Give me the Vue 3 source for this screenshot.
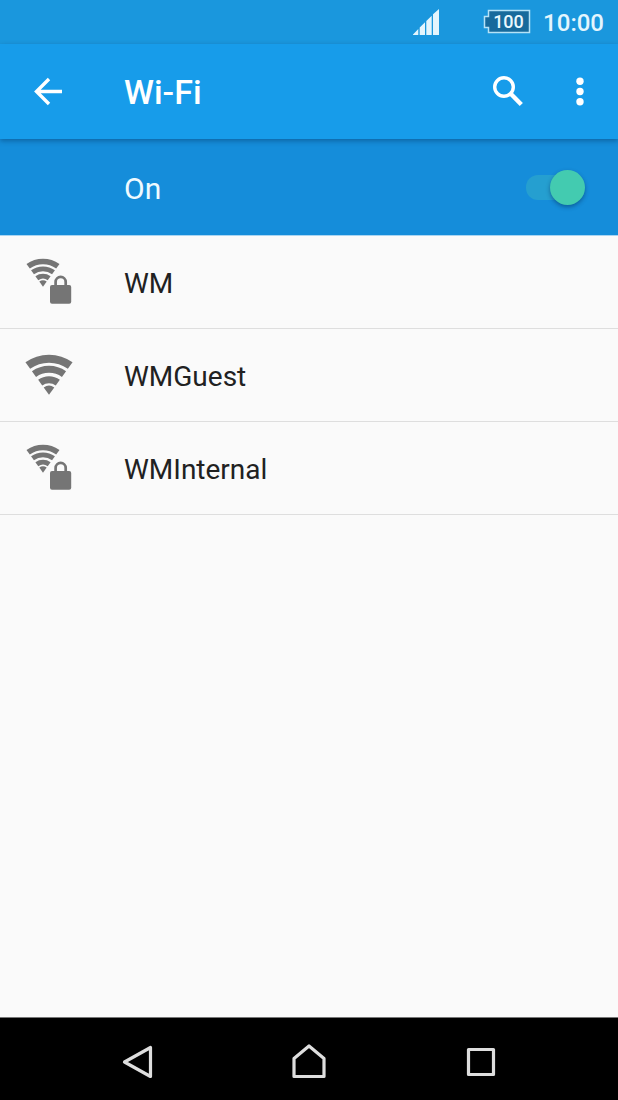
<script setup>
import { ref } from 'vue'

const enabled = ref(true)
const networks = [
  { name: 'WM', secured: true },
  { name: 'WMGuest', secured: false },
  { name: 'WMInternal', secured: true }
]
</script>

<template>
  <div class="screen">
    <div class="status-bar">
      <svg class="signal" width="26" height="26" viewBox="0 0 26 26" aria-hidden="true">
        <path d="M0 26V25.5L5.3 20V26ZM6.7 26V18.5L12 13.3V26ZM13.3 26V12L18.7 6.7V26ZM20 26V5.3L26 0V26Z" />
      </svg>
      <svg class="battery" width="48" height="26" viewBox="0 0 48 26" aria-hidden="true">
        <path d="M5.5 1.500H46.500V23.500H5.500V18.500H1.500V7.500H5.500Z" />
        <text x="25.500" y="19" text-anchor="middle">100</text>
      </svg>
      <span class="clock">10:00</span>
    </div>

    <header class="app-bar">
      <button class="icon-button" type="button" aria-label="Back">
        <svg width="48" height="48" viewBox="0 0 48 48">
          <path class="line" d="M38 23.500H13M25 11L12.500 23.500L25 36" />
        </svg>
      </button>
      <h1>Wi-Fi</h1>
      <div class="actions">
        <button class="icon-button" type="button" aria-label="Search">
          <svg width="48" height="48" viewBox="0 0 48 48">
            <circle class="line" cx="20" cy="19" r="9.300" />
            <path class="line handle" d="M26.500 25.500L37.300 36.500" />
          </svg>
        </button>
        <button class="icon-button" type="button" aria-label="More options">
          <svg width="48" height="48" viewBox="0 0 48 48">
            <circle cx="24" cy="13.200" r="3.700" />
            <circle cx="24" cy="23.500" r="3.700" />
            <circle cx="24" cy="33.800" r="3.700" />
          </svg>
        </button>
      </div>
    </header>

    <div class="toggle-bar">
      <label for="wifi-switch">{{ enabled ? 'On' : 'Off' }}</label>
      <input id="wifi-switch" v-model="enabled" class="switch" type="checkbox" role="switch" />
    </div>

    <main>
      <ul v-if="enabled" class="networks">
        <li v-for="network in networks" :key="network.name">
          <button class="network" type="button">
            <svg class="wifi" width="48" height="48" viewBox="0 0 48 48" aria-hidden="true">
              <g :transform="network.secured ? 'translate(18 28.700) scale(.7)' : 'translate(24 43.700)'">
                <path class="arc outer" d="M-21.200 -29.100A36 36 0 0 1 21.200 -29.100" />
                <path class="arc" d="M-15 -20.600A25.500 25.500 0 0 1 15 -20.600" />
                <path class="arc" d="M-8.800 -12.100A15 15 0 0 1 8.800 -12.100" />
                <path d="M0 0L-5.300 -7.300A9 9 0 0 1 5.300 -7.300Z" />
              </g>
              <g v-if="network.secured">
                <path class="halo" d="M30.600 28V24A5.050 5.050 0 0 1 40.700 24V28" />
                <path class="shackle" d="M30.600 28V24A5.050 5.050 0 0 1 40.700 24V28" />
                <rect x="25" y="27" width="21.200" height="18.700" rx="2" />
              </g>
            </svg>
            <span>{{ network.name }}</span>
          </button>
        </li>
      </ul>
    </main>

    <nav class="nav-bar" aria-label="System">
      <button type="button" aria-label="Back">
        <svg width="40" height="40" viewBox="0 0 40 40">
          <path d="M7.500 20L33.500 5.500V34.500Z" />
        </svg>
      </button>
      <button type="button" aria-label="Home">
        <svg width="40" height="40" viewBox="0 0 40 40">
          <path d="M5 16.500L20 4L35 16.500V34.500H5Z" />
        </svg>
      </button>
      <button type="button" aria-label="Recent apps">
        <svg width="40" height="40" viewBox="0 0 40 40">
          <path d="M7.500 7.500H32.500V32.500H7.500Z" />
        </svg>
      </button>
    </nav>
  </div>
</template>

<style>
body {
  margin: 0;
}
</style>

<style scoped>
.screen {
  display: flex;
  flex-direction: column;
  min-height: 100vh;
  background: #fafafa;
  font-family: Roboto, "Liberation Sans", sans-serif;
}

button {
  padding: 0;
  border: 0;
  background: none;
  font: inherit;
  color: inherit;
}

svg {
  display: block;
}

.status-bar {
  display: flex;
  align-items: center;
  justify-content: flex-end;
  height: 44px;
  padding-right: 14px;
  box-sizing: border-box;
  background: #1a97dd;
  color: #e3f5fd;
}

.signal {
  margin-right: 44px;
  fill: #e3f5fd;
}

.battery {
  margin-right: 12px;
}

.battery path {
  fill: #176a9c;
  stroke: #b5e2f7;
  stroke-width: 1.5;
}

.battery text {
  fill: #e9f8fe;
  font-size: 18px;
  font-weight: 500;
}

.clock {
  padding-top: 2px;
  font-size: 24px;
  font-weight: 500;
  line-height: 28px;
}

.app-bar {
  position: relative;
  display: flex;
  align-items: center;
  height: 95px;
  padding: 0 14px 0 24px;
  background: #179cea;
  color: #fff;
  box-shadow: 0 2px 5px rgba(0, 40, 80, 0.4);
}

.icon-button svg {
  fill: #fff;
}

.icon-button .line {
  fill: none;
  stroke: #fff;
  stroke-width: 3.4;
}

.icon-button .handle {
  stroke-width: 4.4;
}

h1 {
  flex: 1;
  margin: 0 0 0 52px;
  font-size: 34px;
  font-weight: 500;
  line-height: 40px;
}

.actions {
  display: flex;
  gap: 24px;
}

.toggle-bar {
  display: flex;
  align-items: center;
  height: 96px;
  padding: 0 33px 0 124px;
  border-bottom: 1px solid #a9d5f2;
  background: #158dda;
  color: #effaff;
}

.toggle-bar label {
  flex: 1;
  padding-top: 4px;
  font-size: 30px;
  line-height: 36px;
}

.switch {
  appearance: none;
  position: relative;
  display: flex;
  align-items: center;
  width: 59px;
  height: 35px;
  margin: 0;
}

.switch::before {
  content: "";
  position: absolute;
  inset: 5px 8px 5px 0;
  border-radius: 12px;
  background: #8bb4cc;
}

.switch::after {
  content: "";
  position: relative;
  width: 35px;
  height: 35px;
  border-radius: 50%;
  background: #ececec;
  box-shadow: 0 2px 4px rgba(0, 40, 80, 0.45);
}

.switch:checked {
  justify-content: flex-end;
}

.switch:checked::before {
  background: #259fd0;
}

.switch:checked::after {
  background: #43cbb0;
}

main {
  flex: 1;
}

.networks {
  margin: 0;
  padding: 0;
  list-style: none;
}

.network {
  display: flex;
  align-items: center;
  gap: 51px;
  width: 100%;
  height: 93px;
  padding: 0 25px;
  border-bottom: 1px solid #dedede;
  color: #212121;
  font-size: 28px;
  line-height: 32px;
  text-align: left;
}

.network span {
  padding-top: 4px;
}

.wifi {
  fill: #757575;
}

.arc,
.shackle,
.halo {
  fill: none;
  stroke: #757575;
  stroke-width: 7;
}

.arc.outer {
  stroke-width: 8;
}

.shackle {
  stroke-width: 2.7;
}

.halo {
  stroke: #fafafa;
  stroke-width: 6;
}

.nav-bar {
  display: flex;
  align-items: center;
  justify-content: center;
  gap: 132px;
  height: 83px;
  padding-top: 5px;
  box-sizing: border-box;
  border-top: 1px solid #777;
  background: #000;
}

.nav-bar path {
  fill: none;
  stroke: #dedede;
  stroke-width: 3.2;
  stroke-linejoin: round;
}
</style>
